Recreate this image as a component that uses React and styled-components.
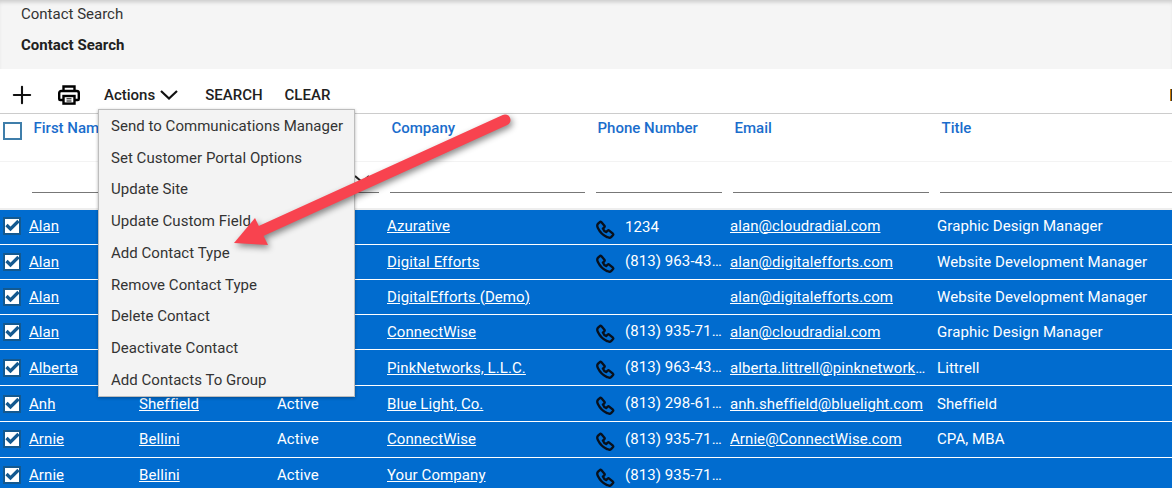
import React from 'react';
import styled, { createGlobalStyle } from 'styled-components';
import { Plus } from 'lucide-react';

const menuItems = [
  'Send to Communications Manager',
  'Set Customer Portal Options',
  'Update Site',
  'Update Custom Field',
  'Add Contact Type',
  'Remove Contact Type',
  'Delete Contact',
  'Deactivate Contact',
  'Add Contacts To Group',
];

const contacts = [
  { first: 'Alan', last: '', status: '', company: 'Azurative', phone: '1234', email: 'alan@cloudradial.com', title: 'Graphic Design Manager', height: 35, pad: 3, drop: 4 },
  { first: 'Alan', last: '', status: '', company: 'Digital Efforts', phone: '(813) 963-4321', email: 'alan@digitalefforts.com', title: 'Website Development Manager', height: 35, pad: 1 },
  { first: 'Alan', last: '', status: '', company: 'DigitalEfforts (Demo)', phone: '', email: 'alan@digitalefforts.com', title: 'Website Development Manager', height: 35, pad: 1 },
  { first: 'Alan', last: '', status: '', company: 'ConnectWise', phone: '(813) 935-7100', email: 'alan@cloudradial.com', title: 'Graphic Design Manager', height: 35, pad: 1 },
  { first: 'Alberta', last: '', status: '', company: 'PinkNetworks, L.L.C.', phone: '(813) 963-4321', email: 'alberta.littrell@pinknetworks.com', title: 'Littrell', height: 36, pad: 0 },
  { first: 'Anh', last: 'Sheffield', status: 'Active', company: 'Blue Light, Co.', phone: '(813) 298-6100', email: 'anh.sheffield@bluelight.com', title: 'Sheffield', height: 36, pad: 0 },
  { first: 'Arnie', last: 'Bellini', status: 'Active', company: 'ConnectWise', phone: '(813) 935-7100', email: 'Arnie@ConnectWise.com', title: 'CPA, MBA', height: 36, pad: 1 },
  { first: 'Arnie', last: 'Bellini', status: 'Active', company: 'Your Company', phone: '(813) 935-7100', email: '', title: '', height: 36, pad: 1 },
];

const HandsetIcon = () => (
  <PhoneSvg width="19" height="19" viewBox="0 0 18 18">
    <path d="M5 2 L8 5.5 C8.4 6 8.2 6.6 7.8 7 L6.6 8.2 C7 9.5 8.5 11 9.8 11.4 L11 10.2 C11.4 9.8 12 9.6 12.5 10 L16 13 C16.4 13.4 16.4 14 16 14.4 L14.5 16 C13.5 17 12 17 10.5 16.2 C6.5 14.3 3.7 11.5 1.8 7.5 C1 6 1 4.5 2 3.5 L3.6 2 C4 1.6 4.6 1.6 5 2 Z" fill="none" stroke="#08101c" strokeWidth="2.2" />
  </PhoneSvg>
);

const Contacts = () => (
  <>
    {contacts.map((c, i) => (
      <Row key={i} $height={c.height} $pad={c.pad}>
        <CheckCell>
          <svg width="18" height="18" viewBox="0 0 18 18">
            <rect x="1" y="1" width="16" height="16" fill="#fff" stroke="#14598f" strokeWidth="2" />
            <path d="M3.5 8 L7.5 12 L15.5 4" fill="none" stroke="#14598f" strokeWidth="3.2" />
          </svg>
        </CheckCell>
        <Cell><a href="#">{c.first}</a></Cell>
        <Cell><a href="#">{c.last}</a></Cell>
        <Cell>{c.status}</Cell>
        <Cell><a href="#">{c.company}</a></Cell>
        <PhoneCell $drop={c.drop || 0}>
          {c.phone && <HandsetIcon />}
          <PhoneText>{c.phone}</PhoneText>
        </PhoneCell>
        <Cell><a href="#">{c.email}</a></Cell>
        <Cell>{c.title}</Cell>
      </Row>
    ))}
  </>
);

export default function App() {
  return (
    <Page>
      <GlobalStyle />
      <Heading>
        <Crumb>Contact Search</Crumb>
        <PageTitle>Contact Search</PageTitle>
      </Heading>

      <Toolbar>
        <IconButton $width={32}><Plus size={28} strokeWidth={1.8} color="#111" /></IconButton>
        <IconButton $width={62}>
          <svg width="22" height="20" viewBox="0 0 22 20">
            <path d="M5.5 6V1.5h11V6" fill="none" stroke="#000" strokeWidth="2.4" />
            <path d="M5 15H2.2A1 1 0 0 1 1.2 14V8a2 2 0 0 1 2-2h15.6a2 2 0 0 1 2 2v6a1 1 0 0 1-1 1H17" fill="none" stroke="#000" strokeWidth="2.4" />
            <rect x="5.5" y="11" width="11" height="7.6" fill="none" stroke="#000" strokeWidth="2.4" />
            <path d="M8.5 13.8h5M8.5 16h5" stroke="#000" strokeWidth="1" />
          </svg>
        </IconButton>
        <ActionsButton>
          Actions
          <svg width="18" height="10" viewBox="0 0 18 10">
            <path d="M1 1l8 7.5L17 1" fill="none" stroke="#111" strokeWidth="2.2" />
          </svg>
        </ActionsButton>
        <TextButton>SEARCH</TextButton>
        <TextButton>CLEAR</TextButton>
        <CutOff />
      </Toolbar>

      <HeaderRow>
        <HeaderCheck />
        <HeaderLabel>First Name</HeaderLabel>
        <HeaderLabel />
        <HeaderLabel />
        <HeaderLabel>Company</HeaderLabel>
        <HeaderLabel>Phone Number</HeaderLabel>
        <HeaderLabel>Email</HeaderLabel>
        <HeaderLabel>Title</HeaderLabel>
      </HeaderRow>

      <FilterRow>
        <Filter />
        <Filter />
        <Filter>
          <svg width="16" height="8" viewBox="0 0 16 8">
            <path d="M1 1l7 6 7-6" fill="none" stroke="#222" strokeWidth="2" />
          </svg>
        </Filter>
        <Filter />
        <Filter />
        <Filter />
        <Filter />
      </FilterRow>

      <Contacts />

      <Menu>
        {menuItems.map(item => <MenuItem key={item}>{item}</MenuItem>)}
      </Menu>

      <Arrow width="300" height="150" viewBox="0 0 300 150">
        <path d="M275 12 L31 123" stroke="#f8434f" strokeWidth="11" strokeLinecap="round" fill="none" />
        <path d="M4 135 L25 110 L38 137 Z" fill="#f8434f" />
      </Arrow>
    </Page>
  );
}

const GlobalStyle = createGlobalStyle`
  html, body {
    margin: 0;
    padding: 0;
    background: #fff;
  }
  * {
    box-sizing: border-box;
  }
`;

const Page = styled.div`
  position: relative;
  width: 1172px;
  height: 488px;
  overflow: hidden;
  font-family: Roboto, "Liberation Sans", sans-serif;
  font-size: 15px;
  color: #212121;
`;

const Heading = styled.header`
  height: 69px;
  padding: 5px 0 0 21px;
  background: #f5f5f5;
  box-shadow: inset 0 4px 4px -2px rgba(0, 0, 0, 0.18);
`;

const Crumb = styled.div`
  line-height: 18px;
  color: #333;
`;

const PageTitle = styled.h1`
  margin: 13px 0 0;
  font-size: 15px;
  font-weight: 700;
  line-height: 18px;
  color: #212121;
`;

const Toolbar = styled.div`
  display: flex;
  align-items: center;
  height: 45px;
  padding: 8px 0 0 6px;
  border-bottom: 1px solid #ccc;
`;

const IconButton = styled.div`
  display: flex;
  justify-content: center;
  align-items: center;
  width: ${p => p.$width}px;
`;

const ActionsButton = styled.div`
  display: flex;
  align-items: center;
  gap: 5px;
  margin: 0 5px 0 4px;
  font-weight: 500;
`;

const TextButton = styled.div`
  margin-left: 22px;
  font-weight: 500;
`;

const CutOff = styled.div`
  width: 2px;
  height: 12px;
  margin: -1px 0 0 auto;
  background: linear-gradient(90deg, #c87800 50%, #333 50%);
`;

const HeaderRow = styled.div`
  display: grid;
  grid-template-columns: 100px 125px 100px 195px 126px 196px 1fr;
  column-gap: 11px;
  position: relative;
  height: 48px;
  padding: 5px 0 0 32px;
  border-bottom: 1px solid #f3f3f3;
`;

const HeaderCheck = styled.div`
  position: absolute;
  top: 8px;
  left: 3px;
  width: 19px;
  height: 18px;
  border: 2px solid #3f7eaa;
`;

const HeaderLabel = styled.div`
  padding-left: 1.5px;
  line-height: 18px;
  font-weight: 500;
  color: #1a6dcc;
`;

const FilterRow = styled.div`
  display: grid;
  grid-template-columns: 100px 125px 100px 195px 126px 196px 1fr;
  column-gap: 11px;
  height: 48px;
  padding: 0 0 15px 32px;
  border-bottom: 2px solid #eee;
`;

const Filter = styled.div`
  display: flex;
  justify-content: flex-end;
  padding: 13px 9px 0 0;
  border-bottom: 1px solid #777;
`;

const Row = styled.div`
  display: grid;
  grid-template-columns: 29px 110px 138px 110px 209px 134px 207px 1fr;
  align-items: center;
  height: ${p => p.$height}px;
  padding-bottom: ${p => p.$pad}px;
  background: #016ccf;
  border-bottom: 1px solid #fff;
  color: #fff;
  letter-spacing: 0.08px;

  a {
    color: #fff;
    text-decoration: underline;
  }
`;

const Cell = styled.div`
  overflow: hidden;
  padding-right: 10px;
  white-space: nowrap;
  text-overflow: ellipsis;
  line-height: 18px;
`;

const CheckCell = styled.div`
  display: flex;
  padding-left: 3px;
`;

const PhoneCell = styled.div`
  display: flex;
  align-items: flex-start;
  gap: 10px;
  margin-top: ${p => p.$drop}px;
`;

const PhoneSvg = styled.svg`
  flex: none;
  margin-top: 4px;
`;

const PhoneText = styled.span`
  overflow: hidden;
  width: 98px;
  margin-top: 2px;
  white-space: nowrap;
  text-overflow: ellipsis;
  line-height: 18px;
`;

const Menu = styled.div`
  position: absolute;
  top: 109px;
  left: 98px;
  width: 257px;
  height: 288px;
  padding-top: 0.8px;
  background: #f3f3f3;
  border: 1px solid #bdbdbd;
  box-shadow: 0 1px 3px rgba(0, 0, 0, 0.3);
`;

const MenuItem = styled.div`
  height: 31.75px;
  padding-left: 12px;
  line-height: 31px;
  white-space: nowrap;
  color: #333;
  letter-spacing: 0.03px;
`;

const Arrow = styled.svg`
  position: absolute;
  top: 108px;
  left: 230px;
  overflow: visible;
  filter: drop-shadow(2px 3px 3px rgba(0, 0, 0, 0.45));
`;
